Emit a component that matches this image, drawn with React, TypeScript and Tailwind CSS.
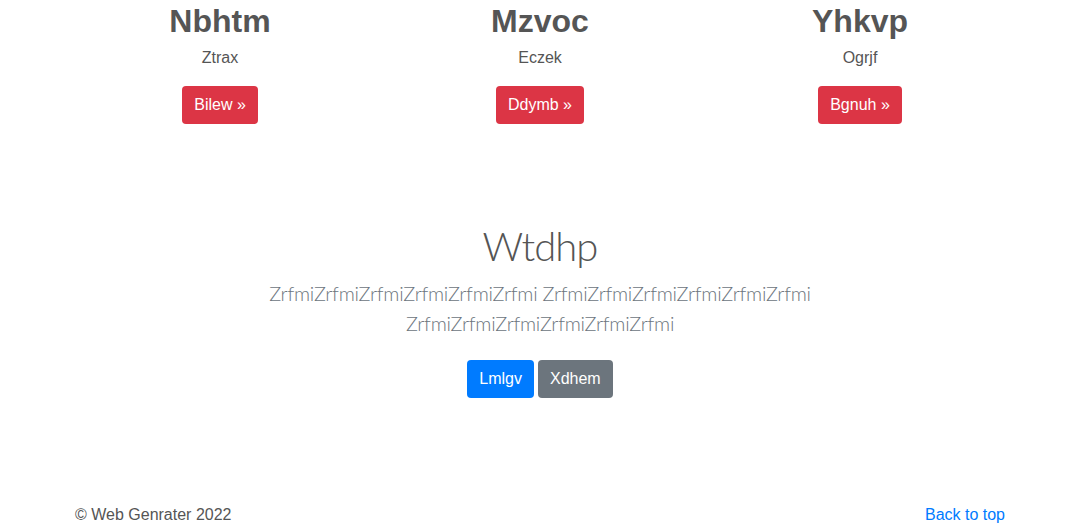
import React from "react";

const features = [
  { title: "Nbhtm", text: "Ztrax", cta: "Bilew" },
  { title: "Mzvoc", text: "Eczek", cta: "Ddymb" },
  { title: "Yhkvp", text: "Ogrjf", cta: "Bgnuh" },
];

const App = () => {
  return (
    <div className="min-h-screen bg-white font-['Liberation_Sans',Arial,sans-serif] text-[#555]">
      <div className="mx-auto max-w-[960px] pt-[2px]">
        <div className="grid grid-cols-3">
          {features.map((f) => (
            <div key={f.title} className="px-[15px] text-center">
              <h2 className="mb-[6px] text-[32px] font-bold leading-[38px]">{f.title}</h2>
              <p className="mb-4 text-base leading-6">{f.text}</p>
              <a
                href="#"
                className="inline-block rounded bg-[#dc3545] px-3 py-[7px] text-base leading-6 text-white"
              >
                {f.cta} »
              </a>
            </div>
          ))}
        </div>
      </div>

      <section className="mt-[98px] text-center">
        <h1 className="mb-2 font-['Lato',sans-serif] text-[40px] font-light leading-[48px] tracking-[-1px]">
          Wtdhp
        </h1>
        <p className="mx-auto max-w-[610px] font-['Lato',sans-serif] text-[20px] font-light leading-[30px] tracking-[-0.25px] text-[#6c757d]">
          ZrfmiZrfmiZrfmiZrfmiZrfmiZrfmi ZrfmiZrfmiZrfmiZrfmiZrfmiZrfmi ZrfmiZrfmiZrfmiZrfmiZrfmiZrfmi
        </p>
        <div className="mt-[22px] flex justify-center gap-1">
          <a href="#" className="inline-block rounded bg-[#007bff] px-3 py-[7px] text-base leading-6 text-white">
            Lmlgv
          </a>
          <a href="#" className="inline-block rounded bg-[#6c757d] px-3 py-[7px] text-base leading-6 text-white">
            Xdhem
          </a>
        </div>
      </section>

      <footer className="mx-auto mt-[105px] flex max-w-[960px] justify-between px-[15px] pb-3 text-base leading-6">
        <p>© Web Genrater 2022</p>
        <a href="#" className="text-[#007bff]">
          Back to top
        </a>
      </footer>
    </div>
  );
};

export default App;
